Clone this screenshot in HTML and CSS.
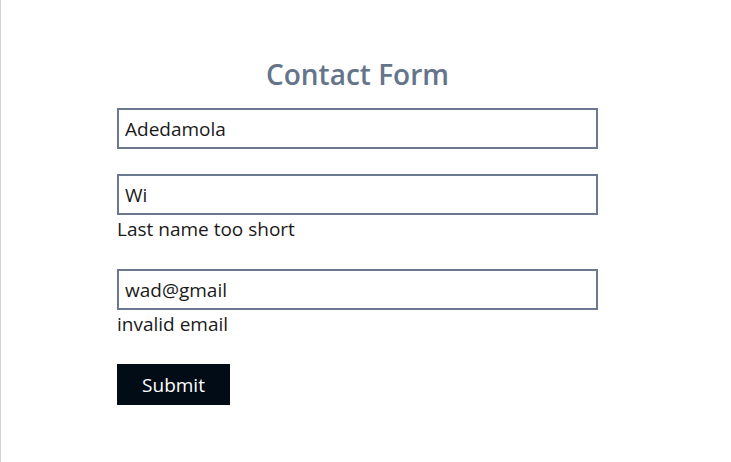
FILE: index.html
```html
<!DOCTYPE html>
<html lang="en">
<head>
<meta charset="utf-8">
<title>Contact Form</title>
<link rel="stylesheet" href="styles.css">
</head>
<body>
<main class="page">
  <form class="form">
    <h1 class="title">Contact Form</h1>
    <div class="field">
      <input class="input" type="text" value="Adedamola">
    </div>
    <div class="field">
      <input class="input" type="text" value="Wi">
      <p class="error">Last name too short</p>
    </div>
    <div class="field">
      <input class="input" type="text" value="wad@gmail">
      <p class="error">invalid email</p>
    </div>
    <button class="submit" type="button">Submit</button>
  </form>
</main>
</body>
</html>
```
FILE: styles.css
```css
html, body {
  margin: 0;
  height: 100%;
  background: #ffffff;
}
body {
  border-left: 1px solid #d3d3d3;
  box-sizing: border-box;
  font-family: "Open Sans", "Noto Sans", sans-serif;
  color: #1a1a1a;
}
.page {
  padding: 55px 0 0 116px;
}
.form {
  width: 481px;
  display: flex;
  flex-direction: column;
  align-items: flex-start;
}
.title {
  align-self: stretch;
  text-align: center;
  margin: 0 0 15px;
  font-size: 28px;
  line-height: 38px;
  font-weight: 600;
  color: #64748b;
}
.field {
  align-self: stretch;
  margin-bottom: 25px;
  display: flex;
  flex-direction: column;
}
.input {
  box-sizing: border-box;
  width: 481px;
  height: 41px;
  margin: 0;
  border: 2px solid #6b7890;
  padding: 0 6px;
  font-family: inherit;
  font-size: 19px;
  color: #1a1a1a;
  outline: none;
  background: #fff;
}
.error {
  margin: 0 0 3px;
  padding-top: 2px;
  font-size: 19px;
  line-height: 24px;
  color: #1a1a1a;
}
.submit {
  width: 113px;
  height: 41px;
  border: none;
  background: #020c16;
  color: #ffffff;
  font-family: inherit;
  font-size: 19px;
  padding: 0;
  cursor: pointer;
}
```
